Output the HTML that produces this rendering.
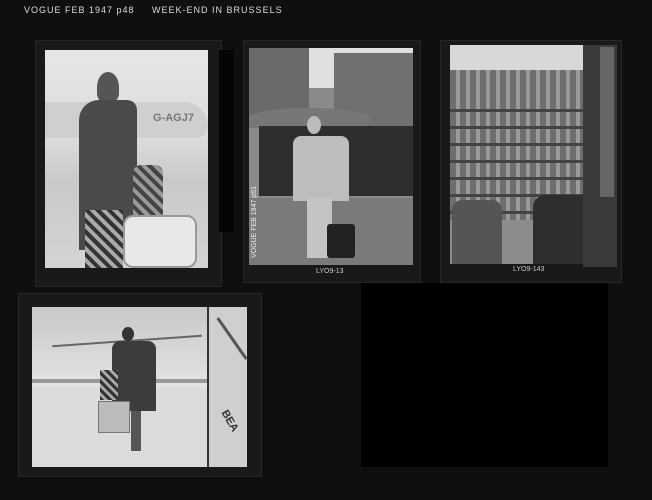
<!DOCTYPE html><html><head><style>
*{margin:0;padding:0;box-sizing:border-box}
body{width:652px;height:500px;background:#0f0f0f;position:relative;overflow:hidden;font-family:"Liberation Sans",sans-serif}
.a{position:absolute}
.fr{background:#191919;border:1px solid #262626}
</style></head><body>
<div class="a" style="left:24px;top:5px;color:#ddd;font-size:9px;letter-spacing:1px">VOGUE FEB 1947 p48 &nbsp;&nbsp;&nbsp;&nbsp;WEEK-END IN BRUSSELS</div>

<!-- frame 1 -->
<div class="a fr" style="left:35px;top:40px;width:187px;height:247px"></div>
<div class="a" style="left:219px;top:50px;width:15px;height:182px;background:#050505"></div>
<div class="a" style="left:45px;top:50px;width:163px;height:218px;background:linear-gradient(#e6e6e6 0,#dcdcdc 40%,#c9c9c9 60%,#d4d4d4 100%);overflow:hidden">
 <div class="a" style="left:0;top:52px;width:163px;height:36px;background:#cfcfcf;border-radius:0 40px 20px 0"></div>
 <div class="a" style="left:108px;top:62px;width:58px;height:18px;color:#777;font-size:11px;font-weight:bold">G-AGJ7</div>
 <div class="a" style="left:52px;top:22px;width:22px;height:30px;background:#555;border-radius:50% 50% 30% 30%"></div>
 <div class="a" style="left:34px;top:50px;width:58px;height:150px;background:#4a4a4a;border-radius:20px 10px 0 0"></div>
 <div class="a" style="left:40px;top:160px;width:38px;height:58px;background:repeating-linear-gradient(45deg,#333 0 4px,#aaa 4px 8px)"></div>
 <div class="a" style="left:88px;top:115px;width:30px;height:55px;background:repeating-linear-gradient(45deg,#444 0 4px,#999 4px 8px);border-radius:8px"></div>
 <div class="a" style="left:78px;top:165px;width:74px;height:53px;background:#e8e8e8;border:2px solid #999;border-radius:10px"></div>
</div>

<!-- frame 2 -->
<div class="a fr" style="left:243px;top:40px;width:178px;height:243px"></div>
<div class="a" style="left:249px;top:48px;width:164px;height:217px;background:#8a8a8a;overflow:hidden">
 <div class="a" style="left:0;top:0;width:164px;height:40px;background:#e0e0e0"></div>
 <div class="a" style="left:0;top:0;width:60px;height:80px;background:#6a6a6a"></div>
 <div class="a" style="left:85px;top:5px;width:79px;height:95px;background:#707070"></div>
 <div class="a" style="left:0;top:60px;width:120px;height:20px;background:#777;border-radius:50% 50% 0 0"></div>
 <div class="a" style="left:10px;top:78px;width:154px;height:70px;background:#2e2e2e"></div>
 <div class="a" style="left:0;top:150px;width:164px;height:67px;background:#7a7a7a"></div>
 <div class="a" style="left:58px;top:68px;width:14px;height:18px;background:#bbb;border-radius:50%"></div>
 <div class="a" style="left:44px;top:88px;width:56px;height:65px;background:#bdbdbd;border-radius:8px 8px 0 0"></div>
 <div class="a" style="left:58px;top:150px;width:25px;height:60px;background:#c4c4c4"></div>
 <div class="a" style="left:78px;top:176px;width:28px;height:34px;background:#222;border-radius:3px"></div>
 <div class="a" style="left:2px;top:110px;width:20px;height:100px;color:#eee;font-size:7px;writing-mode:vertical-rl;transform:rotate(180deg)">VOGUE FEB 1947 p51</div>
</div>
<div class="a" style="left:316px;top:268px;color:#ccc;font-size:7px">LYO9-13</div>

<!-- frame 3 -->
<div class="a fr" style="left:440px;top:40px;width:182px;height:243px"></div>
<div class="a" style="left:583px;top:45px;width:34px;height:222px;background:#3a3a3a"></div>
<div class="a" style="left:600px;top:47px;width:14px;height:150px;background:#666"></div>
<div class="a" style="left:450px;top:45px;width:133px;height:219px;background:#d8d8d8;overflow:hidden">
 <div class="a" style="left:0;top:25px;width:133px;height:150px;background:repeating-linear-gradient(90deg,#6e6e6e 0 6px,#9a9a9a 6px 10px)"></div>
 <div class="a" style="left:0;top:50px;width:133px;height:120px;background:repeating-linear-gradient(#0000 0 14px,#444 14px 17px)"></div>
 <div class="a" style="left:0;top:175px;width:133px;height:44px;background:#8c8c8c"></div>
 <div class="a" style="left:2px;top:155px;width:50px;height:64px;background:#555;border-radius:10px 10px 0 0"></div>
 <div class="a" style="left:83px;top:150px;width:50px;height:69px;background:#2e2e2e;border-radius:12px 0 0 0"></div>
</div>
<div class="a" style="left:513px;top:266px;color:#ccc;font-size:7px">LYO9-143</div>

<!-- frame 4 -->
<div class="a fr" style="left:18px;top:293px;width:244px;height:184px"></div>
<div class="a" style="left:32px;top:307px;width:215px;height:160px;background:#dcdcdc;overflow:hidden">
 <div class="a" style="left:0;top:0;width:175px;height:80px;background:linear-gradient(#c8c8c8,#e4e4e4)"></div>
 <div class="a" style="left:20px;top:33px;width:150px;height:2px;background:#666;transform:rotate(-4deg)"></div>
 <div class="a" style="left:0;top:72px;width:175px;height:4px;background:#999"></div>
 <div class="a" style="left:175px;top:0;width:2px;height:160px;background:#333"></div>
 <div class="a" style="left:177px;top:0;width:38px;height:160px;background:#cfcfcf"></div>
 <div class="a" style="left:175px;top:30px;width:50px;height:3px;background:#555;transform:rotate(55deg)"></div>
 <div class="a" style="left:186px;top:108px;color:#333;font-size:11px;font-weight:bold;transform:rotate(60deg)">BEA</div>
 <div class="a" style="left:90px;top:20px;width:12px;height:14px;background:#333;border-radius:50%"></div>
 <div class="a" style="left:80px;top:34px;width:44px;height:70px;background:#3c3c3c;border-radius:8px 8px 0 0"></div>
 <div class="a" style="left:68px;top:63px;width:18px;height:30px;background:repeating-linear-gradient(45deg,#333 0 3px,#aaa 3px 6px)"></div>
 <div class="a" style="left:66px;top:94px;width:32px;height:32px;background:#bbb;border:1px solid #777"></div>
 <div class="a" style="left:99px;top:104px;width:10px;height:40px;background:#555"></div>
</div>

<!-- black rect -->
<div class="a" style="left:361px;top:283px;width:247px;height:184px;background:#000"></div>
</body></html>
